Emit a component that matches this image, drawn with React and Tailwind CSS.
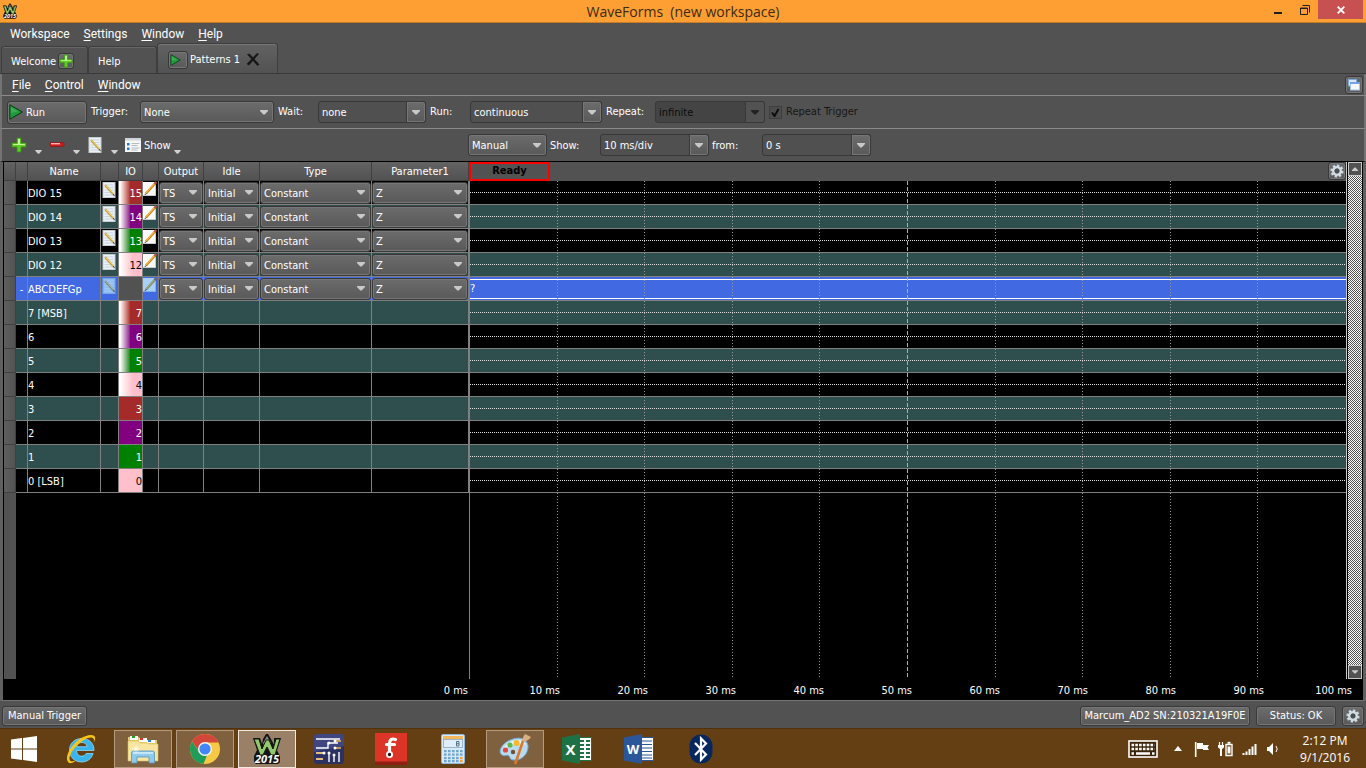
import React from "react";

const TINY = "font-['DejaVu_Sans_Condensed','DejaVu_Sans',sans-serif] text-[11px]";

const RAISED =
  "border border-[#383838] rounded-[3px] bg-linear-to-b from-[#6c6c6c] to-[#595959] shadow-[inset_0_0_0_1px_#777777]";

function Caret({ className = "", size = "w-2 h-[5px]" }) {
  return (
    <svg viewBox="0 0 8 5" className={size + " " + className} aria-hidden="true">
      <path d="M0 0h8v1L4.700 4.600H3.300L0 1z" fill="currentColor" />
    </svg>
  );
}

function Combo({ label, value, className = "" }) {
  return (
    <span className={"grid items-center text-white h-[22px] " + className}>
      <select
        aria-label={label}
        defaultValue={value}
        className={"col-start-1 row-start-1 appearance-none w-full h-full pt-[2px] pl-[3px] pr-3 outline-none " + RAISED}
      >
        <option>{value}</option>
      </select>
      <Caret className="col-start-1 row-start-1 justify-self-end mr-[6px] pointer-events-none text-[#c9c9c9]" />
    </span>
  );
}

function EditCombo({ id, value, className = "", disabled = false }) {
  return (
    <span className={"grid items-center h-[22px] " + className}>
      <select
        id={id}
        defaultValue={value}
        disabled={disabled}
        className={
          "col-start-1 row-start-1 appearance-none w-full h-full pt-[2px] pl-[3px] border border-[#383838] rounded-[3px] outline-none opacity-100 " +
          (disabled ? "bg-[#444444] text-[#0c0c0c]" : "bg-[#505050] text-white")
        }
      >
        <option>{value}</option>
      </select>
      <span
        className={
          "col-start-1 row-start-1 justify-self-end w-5 h-full grid place-items-center pointer-events-none " +
          (disabled
            ? "border border-[#383838] rounded-r-[3px] bg-[#525252] text-[#222222]"
            : "border border-[#383838] rounded-r-[3px] bg-linear-to-b from-[#6c6c6c] to-[#595959] shadow-[inset_0_0_0_1px_#777777] text-[#c9c9c9]")
        }
      >
        <Caret />
      </span>
    </span>
  );
}

function PlayIcon({ className }) {
  return (
    <svg viewBox="0 0 14 16" className={className} aria-hidden="true">
      <path d="M.8.8l12.500 7.200L.8 15.200z" fill="#1f9a3c" stroke="#0b3516" strokeWidth="1" />
      <path d="M2 3l7 4.500L2 9z" fill="#55b868" opacity=".6" />
    </svg>
  );
}

function PlusIcon({ className }) {
  return (
    <svg viewBox="0 0 16 16" className={className} aria-hidden="true">
      <path d="M6 1h4v5h5v4h-5v5H6v-5H1V6h5z" fill="#5fcb24" stroke="#3b8f14" strokeWidth=".8" />
      <path d="M7 2h2v5h5v1H2V7h5z" fill="#c5f59c" />
    </svg>
  );
}

function MinusIcon({ className }) {
  return (
    <svg viewBox="0 0 16 16" className={className} aria-hidden="true">
      <rect x="1" y="5.500" width="14" height="4" rx="1" fill="#c81e1e" stroke="#8c1010" strokeWidth=".6" />
      <rect x="2" y="6" width="9" height="1.400" fill="#ffb0b0" />
    </svg>
  );
}

function NoteIcon({ className, tint = false }) {
  return (
    <svg viewBox="0 0 14 16" className={className} aria-hidden="true">
      <rect x="1" y=".5" width="12" height="15" fill={tint ? "#8fbdf0" : "#eef1f4"} stroke={tint ? "#79a8e2" : "#c4ccd4"} />
      <path d="M2.500 3h9M2.500 5.500h9M2.500 8h9M2.500 10.500h9M2.500 13h9" stroke={tint ? "#a8cdf5" : "#b9cfe6"} strokeWidth=".8" />
      <path d="M3 3l8 9" stroke={tint ? "#7d8f86" : "#c9a43c"} strokeWidth="2" />
      <path d="M3.400 2.700l8 9" stroke={tint ? "#b9bf9a" : "#f3dc86"} strokeWidth=".8" />
      <path d="M11 12l1.500 2" stroke="#555" strokeWidth="1.200" />
    </svg>
  );
}

function PencilIcon({ className, tint = false }) {
  return (
    <svg viewBox="0 0 14 16" className={className} aria-hidden="true">
      <rect x="0" y="1" width="12.500" height="14" fill={tint ? "#a9d0f7" : "#fafafa"} />
      <path d="M0 14.500h12.500V3" fill="none" stroke={tint ? "#7fb0e8" : "#c9c9c9"} />
      <path d="M3 12.500L12.500 2" stroke={tint ? "#6d8270" : "#b8741a"} strokeWidth="2.200" />
      <path d="M3 12L12 2" stroke={tint ? "#a7a878" : "#f6b73c"} strokeWidth="1.200" />
      <path d="M11.500 3l1.800-2" stroke={tint ? "#77666a" : "#c05040"} strokeWidth="2" />
      <path d="M1.800 14l1.600-1.800" stroke="#444" strokeWidth="1" />
    </svg>
  );
}

function GearIcon({ className }) {
  return (
    <svg viewBox="0 0 16 16" className={className} aria-hidden="true">
      <g fill="#d3dce2" stroke="#5c666c" strokeWidth=".5">
        {[0, 45, 90, 135, 180, 225, 270, 315].map((a) => (
          <rect key={a} x="6.500" y="1.200" width="3" height="3.500" transform={`rotate(${a + 12} 8 8)`} />
        ))}
      </g>
      <circle cx="8" cy="8" r="3.700" fill="none" stroke="#d3dce2" strokeWidth="2.400" />
      <circle cx="8" cy="8" r="2.400" fill="#4a4f52" />
    </svg>
  );
}

function WaveLogo({ className }) {
  return (
    <svg viewBox="0 0 32 32" className={className} aria-hidden="true">
      <path d="M12 6l3-5h2l3 5 9 17v6l-2 2H5l-2-2v-6l3-6L2 5h7l2 6z" fill="#141414" />
      <path d="M16 3l4 7-2 5-2-4-2 4-2-5z" fill="#8d8d8d" />
      <path d="M23 5h7l-4 12-3-4z" fill="#141414" />
      <path d="M3 6h5l3 10 4-9h3l4 9 3-10h4l-5 16h-4l-4-8-4 8H9z" fill="#93c86c" stroke="#141414" strokeWidth="1" />
      <path d="M5 22h22l2 4-1 4-2 1H6l-2-1-1-4z" fill="#141414" />
      <text x="16" y="30" textAnchor="middle" fontFamily="Open Sans, sans-serif" fontStyle="italic" fontWeight="700" fontSize="11" fill="#ffffff">
        2015
      </text>
    </svg>
  );
}

function Mn({ text, at = 0 }) {
  return (
    <button type="button" className="leading-4">
      {text.slice(0, at)}
      <span className="underline underline-offset-2">{text[at]}</span>
      {text.slice(at + 1)}
    </button>
  );
}

const IO = {
  brown: "bg-[#a52a2a]",
  purple: "bg-[#800080]",
  green: "bg-[#008000]",
  pink: "bg-[#ffc0cb] text-black",
  brownFade: "bg-linear-to-r from-white from-5% to-[#a52a2a] to-50%",
  purpleFade: "bg-linear-to-r from-white from-5% to-[#800080] to-50%",
  greenFade: "bg-linear-to-r from-white from-5% to-[#008000] to-50%",
  pinkFade: "bg-linear-to-r from-white from-5% to-[#ffc0cb] to-60% text-black",
};

const ROWS = [
  { name: "DIO 15", io: "15", color: "brownFade", ctl: true },
  { name: "DIO 14", io: "14", color: "purpleFade", ctl: true },
  { name: "DIO 13", io: "13", color: "greenFade", ctl: true },
  { name: "DIO 12", io: "12", color: "pinkFade", ctl: true },
  { name: "ABCDEFGp", io: "", color: "", ctl: true, selected: true },
  { name: "7 [MSB]", io: "7", color: "brownFade" },
  { name: "6", io: "6", color: "purpleFade" },
  { name: "5", io: "5", color: "greenFade" },
  { name: "4", io: "4", color: "pinkFade" },
  { name: "3", io: "3", color: "brown" },
  { name: "2", io: "2", color: "purple" },
  { name: "1", io: "1", color: "green" },
  { name: "0 [LSB]", io: "0", color: "pink" },
];

const rowBg = (r, i) => (r.selected ? "bg-[#4169e1]" : i % 2 ? "bg-[#2f4f4f]" : "bg-black");

function SignalTable() {
  const edge = "border-r border-b border-[#808080] overflow-hidden";
  const cell = "p-0 " + edge;
  const textCell = "px-0 pb-0 pt-[2px] " + edge;
  const head =
    "px-0 pb-0 pt-[2px] font-normal border-r border-b border-[#404040] bg-linear-to-b from-[#636363] to-[#525252]";
  return (
    <table className="table-fixed border-separate border-spacing-0 w-[465px] text-white">
      <colgroup>
        <col className="w-3" />
        <col className="w-3" />
        <col className="w-[73px]" />
        <col className="w-[18px]" />
        <col className="w-6" />
        <col className="w-4" />
        <col className="w-[45px]" />
        <col className="w-14" />
        <col className="w-28" />
        <col className="w-[97px]" />
      </colgroup>
      <thead>
        <tr className="h-[19px] leading-4">
          <th className={head} />
          <th className={head} />
          <th className={head}>Name</th>
          <th className={head} />
          <th className={head}>IO</th>
          <th className={head} />
          <th className={head}>Output</th>
          <th className={head}>Idle</th>
          <th className={head}>Type</th>
          <th className={head}>Parameter1</th>
        </tr>
      </thead>
      <tbody>
        {ROWS.map((r, i) => (
          <tr key={r.name} className={"h-6 leading-4 " + rowBg(r, i)}>
            <td className="p-0 border-r border-b border-[#404040] bg-linear-to-r from-[#5f5f5f] to-[#525252]" />
            <td className={textCell + " text-center"}>{r.selected ? "-" : ""}</td>
            <td className={textCell}>{r.name}</td>
            <td className={cell + " align-top"}>
              {r.ctl && (
                <button type="button" aria-label={"Edit " + r.name} className="block pt-px pl-px">
                  <NoteIcon tint={r.selected} className="w-[14px] h-4" />
                </button>
              )}
            </td>
            <td className={textCell + " text-right " + (r.selected ? "bg-[#525252]" : IO[r.color])}>{r.io}</td>
            <td className={cell + " align-top"}>
              {r.ctl && (
                <button type="button" aria-label={"Properties of " + r.name} className="block">
                  <PencilIcon tint={r.selected} className="w-[14px] h-4" />
                </button>
              )}
            </td>
            <td className={cell}>{r.ctl && <Combo label={r.name + " output"} value="TS" />}</td>
            <td className={cell}>{r.ctl && <Combo label={r.name + " idle"} value="Initial" />}</td>
            <td className={cell}>{r.ctl && <Combo label={r.name + " type"} value="Constant" />}</td>
            <td className={cell}>{r.ctl && <Combo label={r.name + " parameter"} value="Z" />}</td>
          </tr>
        ))}
      </tbody>
    </table>
  );
}

function Plot() {
  return (
    <section aria-label="Signal preview" className="flex-1 min-w-0 flex flex-col">
      <div className="h-[19px] shrink-0 bg-[#525252] flex justify-between">
        <div className="w-[81px] border-2 border-[#ff0000] text-black font-bold flex items-center justify-center">Ready</div>
        <button type="button" aria-label="Plot options" className={"w-[18px] h-[18px] grid place-items-center " + RAISED}>
          <GearIcon className="w-4 h-4" />
        </button>
      </div>
      <div className="relative flex-1 border-l border-[#808080]">
        {ROWS.map((r, i) => (
          <div key={r.name} className={"h-6 border-b border-[#808080] flex flex-col justify-center " + rowBg(r, i)}>
            {r.selected ? (
              <div className="h-5 border-y border-white flex items-center pt-[2px] text-white">?</div>
            ) : (
              <div className="h-px bg-[repeating-linear-gradient(90deg,#e0e0e0_0_1px,transparent_1px_2px)]" />
            )}
          </div>
        ))}
        <div className="absolute inset-0 grid grid-cols-10 pointer-events-none">
          {Array.from({ length: 10 }, (_, i) => (
            <div key={i} className="flex justify-end">
              {i < 9 && (
                <div
                  className={
                    i === 4
                      ? "w-px bg-[repeating-linear-gradient(180deg,#b0b0b0_0_4px,transparent_4px_6px)]"
                      : "w-px bg-[repeating-linear-gradient(180deg,#9a9a9a_0_1px,transparent_1px_3px)]"
                  }
                />
              )}
            </div>
          ))}
        </div>
      </div>
    </section>
  );
}

function ScrollBar() {
  const btn = "w-[14px] h-[14px] grid place-items-center bg-[#525252] border border-[#c8c8c8] text-[#c9c9c9]";
  return (
    <div className="w-[17px] shrink-0 flex flex-col items-center border-l border-[#c8c8c8]">
      <button type="button" aria-label="Scroll up" className={btn}>
        <Caret size="w-[6px] h-1" className="rotate-180" />
      </button>
      <div className="w-[14px] flex-1 bg-[repeating-conic-gradient(#ffffff_0_25%,#525252_0_50%)] bg-size-[2px_2px]" />
      <button type="button" aria-label="Scroll down" className={btn}>
        <Caret size="w-[6px] h-1" />
      </button>
    </div>
  );
}

function ToolDrop({ label, children }) {
  return (
    <button type="button" aria-label={label} className="h-4 flex items-center gap-2 text-white">
      {children}
      <Caret size="w-[7px] h-1" className="self-end translate-y-px text-[#d0d0d0]" />
    </button>
  );
}

function Task({ label, open, active, children }) {
  return (
    <button
      type="button"
      aria-label={label}
      className={
        "w-[58px] h-[38px] grid place-items-center " +
        (active ? "border border-[#f3e9dc] bg-[#9a8067]" : open ? "border border-[#b39a80] bg-[#80613f]" : "")
      }
    >
      {children}
    </button>
  );
}

const I = "w-8 h-8";

function TaskBar() {
  return (
    <nav aria-label="Taskbar" className="h-10 shrink-0 bg-[#643f14] border-t border-[#50320f] flex items-center justify-between">
      <div className="flex gap-1 items-center">
        <button type="button" aria-label="Start" className="w-12 h-10 grid place-items-center">
          <svg viewBox="0 0 26 26" className="w-[26px] h-[26px]" aria-hidden="true">
            <path d="M0 3.500l11-1.500v10.500H0zM12 1.900L26 0v12.500H12zM0 13.500h11V24L0 22.500zM12 13.500h14V26l-14-1.900z" fill="#fff" />
          </svg>
        </button>
        <Task label="Internet Explorer">
          <svg viewBox="0 0 32 32" className={I} aria-hidden="true">
            <path d="M29 17.500H11.500c.3 4 2.500 5.600 5 5.600 2.300 0 3.800-1 4.600-2.600h7C26.500 26 22 29 16.500 29 9.500 29 4.500 24 4.500 17S10 5.500 16.800 5.500C24.500 5.500 29.200 10.500 29 17.500zM22 13.700c-.3-2.700-2.300-4.200-5-4.200s-4.700 1.500-5.300 4.200z" fill="#39b5ee" stroke="#a2e2fb" strokeWidth=".7" />
            <path d="M3.500 29.500C-1 25 5 13 14 6.500 21 1.500 29 .5 30 4c.4 1.500-.2 3.500-1.200 5.200.4-2.300.2-3.600-1-4.200C24.500 3.400 17 7 11 13.500 5.500 19.500 3.500 25 5 27.400c1 1.500 4 1 6.500-.2-3.500 2.800-6.600 3.700-8 2.300z" fill="#f8c51c" />
          </svg>
        </Task>
        <Task label="File Explorer" open>
          <svg viewBox="0 0 34 32" className="w-[34px] h-8" aria-hidden="true">
            <path d="M2 4h11l2 3h16v21H2z" fill="#e8ca6a" />
            <path d="M4 3h8v4H4zM13 5h8v4h-8zM21 7h8v3h-8z" fill="#fff" />
            <path d="M6 3h3v2H6z" fill="#1aa632" />
            <path d="M14 5h3v2h-3z" fill="#d8352a" />
            <path d="M22 7h3v2h-3z" fill="#2a87dc" />
            <path d="M2 8h10l2 2h7l2 1h9v17H2z" fill="#f7e5a0" stroke="#d9b95a" strokeWidth=".6" />
            <path d="M5.500 30V20q0-2 2-2h19q2 0 2 2v10h-5.500v-6h-12v6z" fill="#8ecaec" stroke="#5394bd" strokeWidth=".8" />
            <path d="M7 20h20" stroke="#d9f1fc" strokeWidth="1.500" />
            <path d="M10 12v8M6 16h8M7.500 13.500l5 5M12.500 13.500l-5 5" stroke="#fff" strokeWidth=".7" />
          </svg>
        </Task>
        <Task label="Chrome" open>
          <svg viewBox="0 0 32 32" className={I} aria-hidden="true">
            <circle cx="16" cy="16" r="15" fill="#f6c945" />
            <path d="M3 8.500A15 15 0 0 1 29.500 9.500H16a6.500 6.500 0 0 0-6.200 8.500z" fill="#d5463a" />
            <path d="M3 8.500L10.400 19.300A6.500 6.500 0 0 0 18 22.200L14.500 31A15 15 0 0 1 3 8.500z" fill="#1f9d58" />
            <circle cx="16" cy="16" r="7" fill="#f5f5f5" />
            <circle cx="16" cy="16" r="5.600" fill="#4285f4" />
          </svg>
        </Task>
        <Task label="WaveForms" open active>
          <WaveLogo className={I} />
        </Task>
        <Task label="Circuit designer">
          <svg viewBox="0 0 30 30" className="w-[30px] h-[30px]" aria-hidden="true">
            <rect width="30" height="30" rx="3" fill="#3f4680" />
            <path d="M0 18l30-6v15q0 3-3 3H3q-3 0-3-3z" fill="#2b3160" />
            <path d="M2 5h24M2 14h12V9h10M2 19h7M2 25h7M15 28V18M20 28v-8M25 28V18" fill="none" stroke="#fff" strokeWidth="1.400" />
            <path d="M21 7h6M21 14h6M2 19h7M2 25h7" stroke="#f0b860" strokeWidth="1.600" />
            <g fill="#fff">
              <circle cx="15" cy="9" r="1.500" />
              <circle cx="21" cy="7" r="1.500" />
              <circle cx="21" cy="14" r="1.500" />
              <circle cx="10" cy="19" r="1.500" />
              <circle cx="15" cy="19" r="1.500" />
              <circle cx="20" cy="21" r="1.500" />
            </g>
          </svg>
        </Task>
        <Task label="Fritzing">
          <svg viewBox="0 0 32 32" className={I} aria-hidden="true">
            <rect width="32" height="32" fill="#dc3527" />
            <rect y="28.500" width="32" height="3.500" fill="#8d2012" />
            <path d="M20.500 6.500c-4-1.500-6 .5-6 4V20M11.500 11.500h8" fill="none" stroke="#fff" strokeWidth="3.200" strokeLinecap="round" />
            <circle cx="14.500" cy="21.500" r="2.600" fill="#2a1010" stroke="#fff" strokeWidth="1.800" />
          </svg>
        </Task>
        <Task label="Calculator">
          <svg viewBox="0 0 24 30" className="w-6 h-[30px]" aria-hidden="true">
            <rect x=".5" y=".5" width="23" height="29" rx="1.500" fill="#d7e8f6" stroke="#8eb8da" />
            <rect x="2" y="2" width="20" height="3" fill="#f3b65a" />
            <rect x="2.500" y="5.500" width="19" height="8" fill="#dfeefa" stroke="#8da7bd" strokeWidth=".8" />
            <path d="M15.500 7.500h2.500v4.500h-2.500zM15.500 9.700h2.500" fill="none" stroke="#49647c" strokeWidth=".9" />
            {[16, 19.5, 23, 26].map((y) =>
              [3, 7, 11, 15, 19].map((x) => (
                <rect key={x + "-" + y} x={x} y={y} width="2.600" height="2.200" fill={x === 19 && y > 21 ? "#f2a12e" : "#6fa6d2"} />
              ))
            )}
          </svg>
        </Task>
        <Task label="Paint" open>
          <svg viewBox="0 0 34 32" className="w-[34px] h-8" aria-hidden="true">
            <path d="M15 6c9-3 16 2 15 9-1 8-8 13-15 12-3 0-3-3-4-4-2-2-4 1-7-1-5-3 0-13 11-16z" fill="#b9dbf0" stroke="#6fa6cc" />
            <path d="M15 8c6-2 11 0 13 4-6-3-15-1-23 5 1-4 5-7 10-9z" fill="#eaf6fd" />
            <circle cx="7.500" cy="17" r="2.600" fill="#df4a3c" />
            <circle cx="12" cy="12" r="2.600" fill="#5cb947" />
            <circle cx="18.500" cy="10" r="3" fill="#f4b92c" />
            <circle cx="15" cy="19" r="2.200" fill="#6f5233" />
            <path d="M17.500 30L25 8" stroke="#e0762a" strokeWidth="2.600" strokeLinecap="round" />
            <path d="M24 8c0-3 2-5 3-7 2 1 4 2 6 3-2 3-5 5-9 4z" fill="#d8b083" />
          </svg>
        </Task>
        <Task label="Excel">
          <svg viewBox="0 0 30 30" className="w-[30px] h-[30px]" aria-hidden="true">
            <path d="M17 3.500h12.500v23H17z" fill="#fff" stroke="#1e7145" />
            <path d="M18 7h4M24 7h4M18 11h4M24 11h4M18 15h4M24 15h4M18 19h4M24 19h4M18 23h4M24 23h4" stroke="#1e7145" strokeWidth="2.200" />
            <path d="M0 3.500L18 0v30L0 26.500z" fill="#1e7145" />
            <text x="8.500" y="20.500" textAnchor="middle" fontFamily="Open Sans, sans-serif" fontWeight="700" fontSize="15" fill="#fff">X</text>
          </svg>
        </Task>
        <Task label="Word">
          <svg viewBox="0 0 30 30" className="w-[30px] h-[30px]" aria-hidden="true">
            <path d="M17 3.500h12.500v23H17z" fill="#fff" stroke="#2b579a" />
            <path d="M18 7h10M18 10.500h10M18 14h10M18 17.500h10M18 21h10M18 24h10" stroke="#2b579a" strokeWidth="1.200" />
            <path d="M0 3.500L18 0v30L0 26.500z" fill="#2b579a" />
            <text x="9" y="20" textAnchor="middle" fontFamily="Open Sans, sans-serif" fontWeight="700" fontSize="13" fill="#fff">W</text>
          </svg>
        </Task>
        <Task label="Bluetooth">
          <svg viewBox="0 0 24 30" className="w-6 h-[30px]" aria-hidden="true">
            <rect x=".5" y=".5" width="23" height="29" rx="11.500" fill="#06285e" />
            <path d="M6 9l11 11.500L12 25.500V4.500L17 9.500 6 21" fill="none" stroke="#fff" strokeWidth="2.200" />
          </svg>
        </Task>
      </div>
      <div className="flex items-center text-white pr-4">
        <svg viewBox="0 0 30 18" className="w-[30px] h-[18px] mr-4" aria-hidden="true">
          <rect x="1" y="1" width="28" height="16" fill="#3c2509" stroke="#fff" strokeWidth="1.600" />
          <path d="M3.500 5h23M3.500 9h23" stroke="#fff" strokeWidth="2.600" strokeDasharray="2.600 1.200" />
          <path d="M3.500 13.500h2.500M8 13.500h14M24 13.500h2.500" stroke="#fff" strokeWidth="2.400" />
        </svg>
        <svg viewBox="0 0 8 5" className="w-2 h-[5px] mr-3" aria-hidden="true">
          <path d="M0 5l4-5 4 5z" fill="#fff" />
        </svg>
        <svg viewBox="0 0 16 16" className="w-4 h-4 mr-2" aria-hidden="true">
          <path d="M1.700 1v15" stroke="#fff" strokeWidth="1.600" />
          <path d="M3 2h6v2h6l-1.500 2.500L15 9H9V8H3z" fill="#fff" />
        </svg>
        <svg viewBox="0 0 16 16" className="w-4 h-4 mr-2" aria-hidden="true">
          <path d="M1.500 1v3M4.500 1v3" stroke="#fff" strokeWidth="1.200" />
          <path d="M0 4h6v2.500L4 8v7H2V8L0 6.500z" fill="#fff" />
          <path d="M8 3.500h6v11H8z" fill="none" stroke="#fff" strokeWidth="1.400" />
          <path d="M9.500 1.800h3" stroke="#fff" strokeWidth="2" />
          <path d="M11 5.500v7" stroke="#fff" strokeWidth="3" />
        </svg>
        <svg viewBox="0 0 16 14" className="w-4 h-[14px] mr-2" aria-hidden="true">
          <path d="M1.500 13v-2M4.500 13V9.500M7.500 13V7M10.500 13V4.500M13.500 13V2" stroke="#fff" strokeWidth="2" />
        </svg>
        <svg viewBox="0 0 14 14" className="w-[14px] h-[14px] mr-5" aria-hidden="true">
          <path d="M1 5h2l4-4v12L3 9H1z" fill="#fff" />
          <path d="M10 4q2.500 3 0 6" fill="none" stroke="#fff" />
        </svg>
        <div className="text-center text-[12px] leading-[17px] font-['Open_Sans',sans-serif]">
          <div>2:12 PM</div>
          <div>9/1/2016</div>
        </div>
      </div>
    </nav>
  );
}

const TICKS = ["10 ms", "20 ms", "30 ms", "40 ms", "50 ms", "60 ms", "70 ms", "80 ms", "90 ms", "100 ms"];

export default function App() {
  const bar = "flex items-center shrink-0 border-x-2 border-[#747474] bg-[#525252]";
  const menuFont = "font-[Roboto,sans-serif] text-[12px]";
  return (
    <div className={"min-h-screen flex flex-col bg-[#525252] text-white " + TINY}>
      <header className="h-[23px] shrink-0 bg-[#fe9f33] border-b border-[#c77b25] grid grid-cols-[1fr_auto_1fr] items-start text-[#3b2a14]">
        <WaveLogo className="w-4 h-4 mt-[3px] ml-[2px]" />
        <h1 className="font-['Open_Sans',sans-serif] text-[14px] leading-[23px] whitespace-pre">WaveForms  (new workspace)</h1>
        <div className="flex justify-end pr-[3px]">
          <button type="button" aria-label="Minimize" className="w-[26px] h-[19px] grid place-items-center">
            <svg viewBox="0 0 10 10" className="w-[10px] h-[10px]" aria-hidden="true">
              <path d="M1 7h8v2H1z" fill="#1e1e1e" />
            </svg>
          </button>
          <button type="button" aria-label="Restore" className="w-[27px] h-[19px] grid place-items-center">
            <svg viewBox="0 0 10 10" className="w-[10px] h-[10px]" aria-hidden="true">
              <path d="M.5 3h7v6.500h-7zM.5 3.500h7M2.500.5h7v7" fill="none" stroke="#1e1e1e" />
            </svg>
          </button>
          <button type="button" aria-label="Close" className="w-[45px] h-[19px] bg-[#c75050] grid place-items-center">
            <svg viewBox="0 0 8 8" className="w-2 h-2" aria-hidden="true">
              <path d="M.7.7l6.600 6.600M7.300.7L.7 7.300" stroke="#fff" strokeWidth="1.800" />
            </svg>
          </button>
        </div>
      </header>

      <nav aria-label="Main menu" className={"h-[21px] shrink-0 flex items-center gap-[14px] pl-[10px] " + menuFont}>
        <Mn text="Workspace" at={5} />
        <Mn text="Settings" />
        <Mn text="Window" />
        <Mn text="Help" />
      </nav>

      <div role="tablist" className="h-[30px] shrink-0 flex items-end pl-px border-b border-[#3a3a3a]">
        <div className="w-[87px] h-[27px] flex items-center gap-[2px] pt-[2px] pl-[9px] border border-b-0 border-[#3e3e3e] rounded-t-[3px] shadow-[inset_0_1px_0_#666666]">
          <button type="button" role="tab" aria-selected="false" className="pt-[2px]">Welcome</button>
          <button type="button" aria-label="Add instrument" className={"w-4 h-4 grid place-items-center " + RAISED}>
            <PlusIcon className="w-[14px] h-[14px]" />
          </button>
        </div>
        <button type="button" role="tab" aria-selected="false" className="w-[69px] h-[27px] text-left pt-1 pl-[9px] border border-b-0 border-[#3e3e3e] rounded-t-[3px] shadow-[inset_0_1px_0_#666666]">
          Help
        </button>
        <div className="w-[121px] h-[30px] flex items-center pt-[2px] pl-[10px] border border-b-0 border-[#3e3e3e] rounded-t-[3px] bg-linear-to-b from-[#626262] to-[#525252] shadow-[inset_0_1px_0_#777777]">
          <button type="button" aria-label="Start Patterns 1" className={"w-5 h-[18px] flex items-center pl-px " + RAISED}>
            <PlayIcon className="w-[11px] h-3" />
          </button>
          <button type="button" role="tab" aria-selected="true" className="ml-[2px] pt-[2px]">Patterns 1</button>
          <button type="button" aria-label="Close tab" className="ml-[6px]">
            <svg viewBox="0 0 14 13" className="w-[14px] h-[13px]" aria-hidden="true">
              <path d="M1.500 1.500l2-.5L13 11.500l-1.500 1zM12.500 1L3 12l-2-1L11 .5z" fill="#161616" stroke="#161616" strokeWidth=".6" />
            </svg>
          </button>
        </div>
      </div>

      <nav aria-label="Instrument menu" className={bar + " h-[22px] justify-between border-b border-b-[#8a8a8a] pl-[10px] pr-px"}>
        <div className={"flex gap-[14px] " + menuFont}>
          <Mn text="File" />
          <Mn text="Control" />
          <Mn text="Window" />
        </div>
        <button type="button" aria-label="Cascade windows" className={"w-[18px] h-[18px] grid place-items-center " + RAISED}>
          <svg viewBox="0 0 12 12" className="w-3 h-3" aria-hidden="true">
            <rect x=".5" y=".5" width="8" height="6.500" fill="#dbe6f4" stroke="#7fa9de" />
            <rect x="2.500" y="4" width="9" height="7" fill="#f4f8fd" stroke="#a6c5ee" />
            <path d="M2 4h10" stroke="#6b9de0" strokeWidth="1.800" />
          </svg>
        </button>
      </nav>

      <div className={bar + " h-[33px] gap-1 border-b border-b-[#8a8a8a] pl-[5px]"}>
        <button type="button" className={"w-20 h-[23px] flex items-center gap-[3px] pl-px " + RAISED}>
          <PlayIcon className="w-[14px] h-4" />
          <span className="pt-[2px]">Run</span>
        </button>
        <span className="w-[45px] pt-px">Trigger:</span>
        <Combo label="Trigger" value="None" className="w-[134px]" />
        <label htmlFor="wait" className="w-9 pt-px">Wait:</label>
        <EditCombo id="wait" value="none" className="w-[108px]" />
        <label htmlFor="run" className="w-9 pt-px">Run:</label>
        <EditCombo id="run" value="continuous" className="w-[132px]" />
        <label htmlFor="repeat" className="w-[45px] pt-px">Repeat:</label>
        <EditCombo id="repeat" value="infinite" className="w-[110px]" disabled />
        <label className="flex items-center gap-1 text-[#161616]">
          <span className="grid place-items-center">
            <input type="checkbox" defaultChecked className="peer col-start-1 row-start-1 appearance-none w-[13px] h-[13px] border border-[#3e3e3e] bg-[#4c4c4c]" />
            <svg viewBox="0 0 9 9" className="col-start-1 row-start-1 w-[9px] h-[9px] hidden peer-checked:block pointer-events-none" aria-hidden="true">
              <path d="M1 4.500L3.500 8 7.500 1" fill="none" stroke="#0a0a0a" strokeWidth="1.900" />
            </svg>
          </span>
          <span className="pt-px">Repeat Trigger</span>
        </label>
      </div>

      <div className={bar + " h-8"}>
        <div className="w-[466px] shrink-0 flex items-center pl-[9px] gap-[7px]">
          <ToolDrop label="Add"><PlusIcon className="w-4 h-4" /></ToolDrop>
          <ToolDrop label="Remove"><MinusIcon className="w-4 h-4" /></ToolDrop>
          <ToolDrop label="Edit"><NoteIcon className="w-4 h-4" /></ToolDrop>
          <button type="button" className="h-4 flex items-center gap-[3px] text-white">
            <svg viewBox="0 0 16 14" className="w-4 h-[14px]" aria-hidden="true">
              <rect width="16" height="14" fill="#f5f6f7" />
              <rect width="16" height="2.500" fill="#cfd4d9" />
              <path d="M2 5h2.500v2.500H2zM2 9.500h2.500V12H2z" fill="#2878d0" />
              <path d="M6.500 5.500h8M6.500 7.500h6M6.500 10h8M6.500 12h6" stroke="#a5adb5" strokeWidth=".8" />
            </svg>
            <span className="pt-[2px]">Show</span>
            <Caret size="w-[7px] h-1" className="self-end translate-y-px text-[#d0d0d0]" />
          </button>
        </div>
        <div className="flex items-center gap-[3px]">
          <Combo label="Mode" value="Manual" className="w-[79px]" />
          <label htmlFor="show" className="w-[47px] pt-[2px]">Show:</label>
          <EditCombo id="show" value="10 ms/div" className="w-[109px]" />
          <label htmlFor="from" className="w-[47px] pt-[2px]">from:</label>
          <EditCombo id="from" value="0 s" className="w-[109px]" />
        </div>
      </div>

      <main className="flex-1 flex flex-col border-x-3 border-x-[#606060] border-t border-t-black border-b border-b-[#747474] bg-black pl-px">
        <div className="flex-1 flex">
          <div className="flex flex-col w-[465px] shrink-0">
            <SignalTable />
            <div className="flex-1 w-3 bg-[#525252]" />
          </div>
          <Plot />
          <ScrollBar />
        </div>
        <div className="flex h-[21px] shrink-0 items-center pt-1">
          <div className="w-[464px] shrink-0 text-right">0 ms</div>
          <div className="flex-1 grid grid-cols-10 pl-1 pr-[11px]">
            {TICKS.map((t) => (
              <div key={t} className="text-right whitespace-nowrap">{t}</div>
            ))}
          </div>
        </div>
      </main>

      <footer className="h-[27px] shrink-0 flex items-center justify-between pt-[3px] px-[2px]">
        <button type="button" className={"h-5 px-[5px] pt-px " + RAISED}>Manual Trigger</button>
        <div className="flex gap-[6px]">
          <button type="button" className={"h-5 w-[170px] pt-px whitespace-nowrap " + RAISED}>Marcum_AD2 SN:210321A19F0E</button>
          <button type="button" className={"h-5 w-20 pt-px " + RAISED}>Status: OK</button>
          <button type="button" aria-label="Device settings" className={"h-5 w-[22px] grid place-items-center " + RAISED}>
            <GearIcon className="w-4 h-4" />
          </button>
        </div>
      </footer>

      <TaskBar />
    </div>
  );
}
